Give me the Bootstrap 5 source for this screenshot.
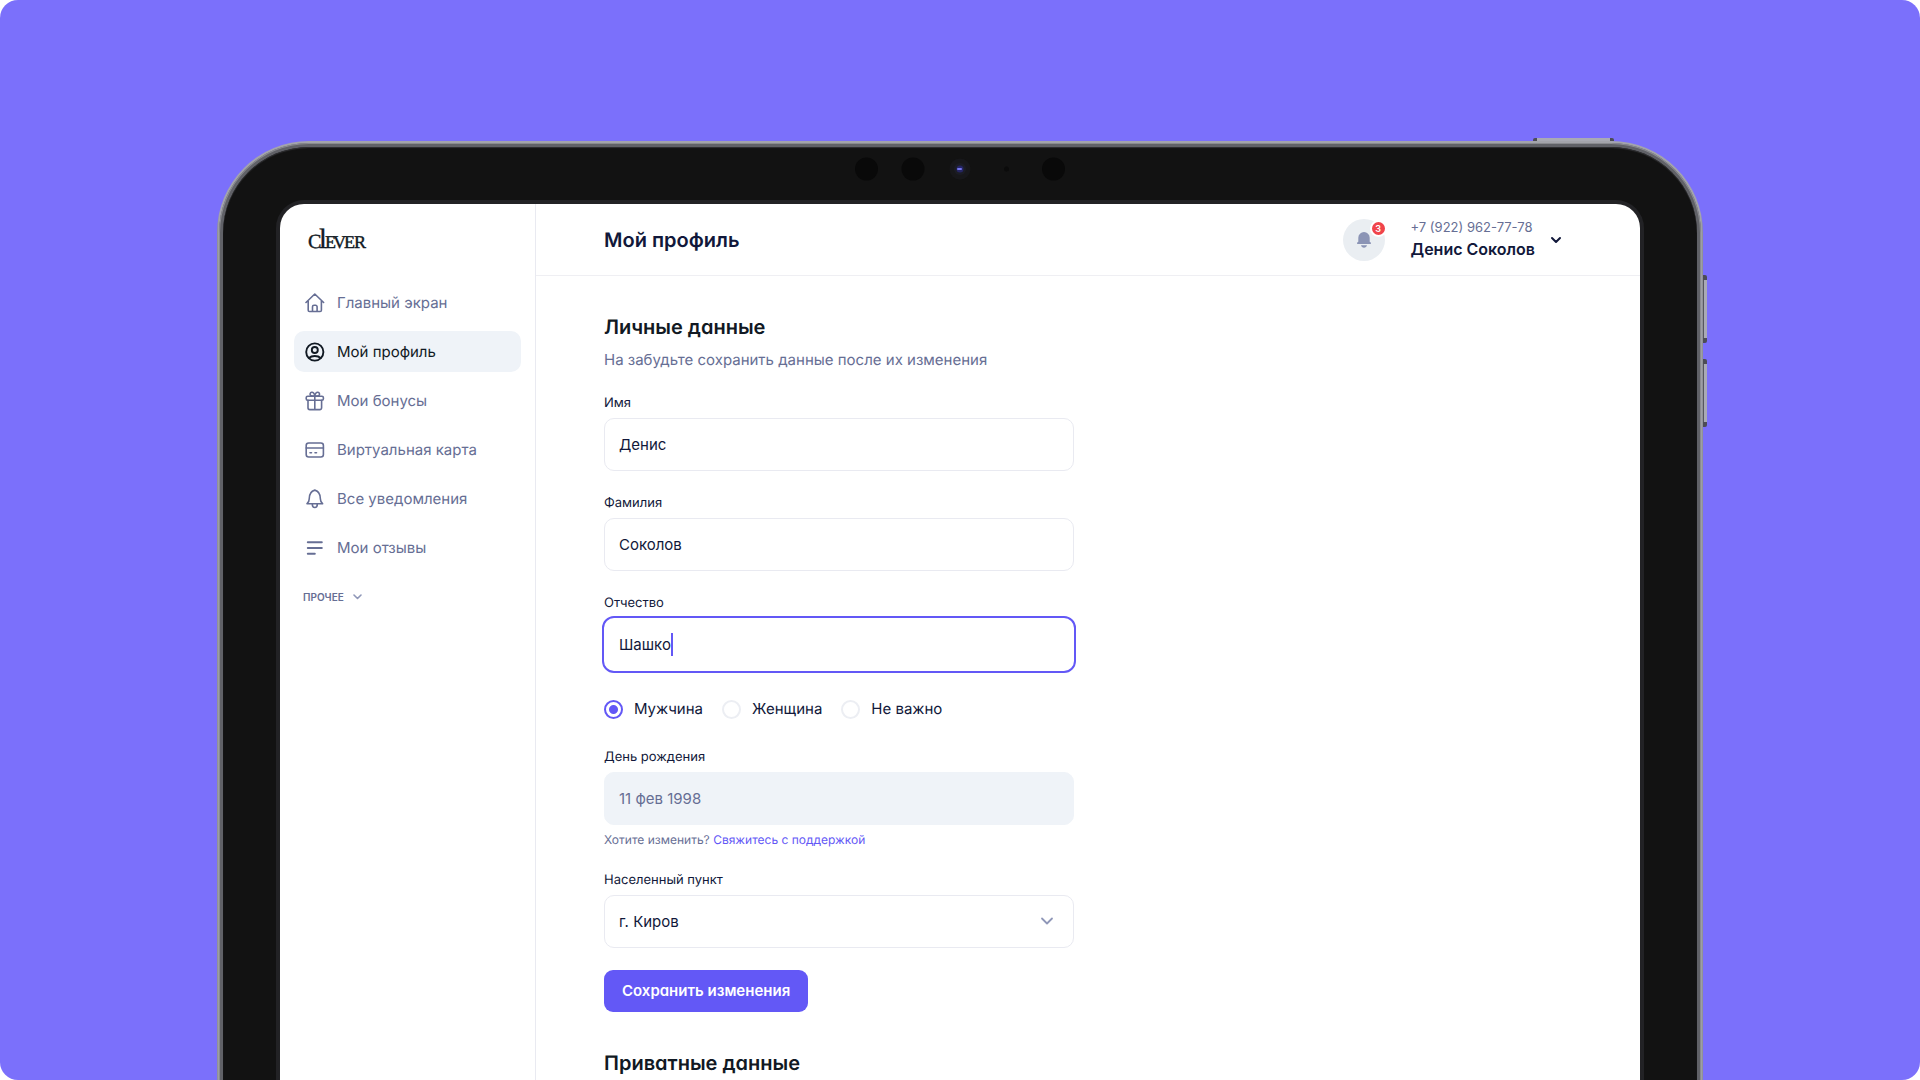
<!DOCTYPE html>
<html lang="ru">
<head>
<meta charset="utf-8">
<meta name="viewport" content="width=device-width, initial-scale=1">
<title>Clever — Мой профиль</title>
<link rel="stylesheet" href="https://cdn.jsdelivr.net/npm/bootstrap@5.3.0/dist/css/bootstrap.min.css">
<style>
:root { --accent: #6358f6; --ink: #11183a; --dark: #111923; --muted: #666e94; --line: #e9eaf1; --soft: #eff3f8; }
body { font-family: Inter, "Noto Sans", sans-serif; font-size: 15px; line-height: 20px; color: var(--ink); background: #fff; text-rendering: geometricPrecision; }
.stage { height: 100vh; background: #7b70fb; border-radius: 18px; padding: 141px 24px 0; }
.tablet { max-width: 1486px; padding: 2px 2px 0; border-radius: 92px 92px 0 0; background: linear-gradient(90deg, #8a8b92, #a3a4ab 2px, #a3a4ab calc(100% - 2px), #8a8b92); }
.tablet-rim { padding: 4px 4px 0; border-radius: 90px 90px 0 0; background: #606167; box-shadow: inset 0 0 0 1px #8a8b90; }
.bezel { padding: 53px 53px 0; border-radius: 86px 86px 0 0; background: #121212; box-shadow: inset 0 1px 1px #303033; }
.screen-edge { padding: 4px 4px 0; border-radius: 28px 28px 0 0; background: #222225; }
.screen { background: #fff; border-radius: 24px 24px 0 0; overflow: hidden; }
.hw { position: absolute; background: #a9aab4; border: 0 solid #4c4c55; }
.hw-power { top: -3px; right: 89px; width: 81px; height: 3px; border-width: 0 4px; border-radius: 2px 2px 0 0; }
.hw-up, .hw-down { right: -4px; width: 4px; height: 68px; border-width: 5px 0; border-radius: 0 2px 2px 0; box-shadow: inset 1px 0 #55555f; }
.hw-up { top: 134px; }
.hw-down { top: 218px; }
.sensors { position: absolute; top: 15px; left: 50%; transform: translateX(-50%); }
.side { width: 256px; border-right: 1px solid var(--line); padding: 16px 14px; }
.brand-mark { margin: 0 0 28px 14px; overflow: visible; }
.side .nav { gap: 8px; }
.side .nav-link { height: 41px; padding: 0 11px; gap: 12px; border-radius: 10px; color: var(--muted); }
.side .nav-link.active { background: var(--soft); color: var(--dark); }
.more-btn { margin: 21px 0 0 9px; font-size: 10px; line-height: 16px; font-weight: 600; color: var(--muted); gap: 9px; }
.topbar { height: 72px; border-bottom: 1px solid #efeff3; padding: 0 78px 0 68px; }
.title-lg { font-size: 20px; line-height: 24px; font-weight: 600; font-feature-settings: "cv11"; margin: 0; }
.title-dark { color: var(--dark); }
.bell-btn { width: 42px; height: 42px; background: #eaeef2; border-radius: 50%; margin-right: 26px; }
.bell-count { position: absolute; top: 1px; right: -2px; width: 17px; height: 17px; border: 2px solid #fff; border-radius: 50%; background: #f0444b; color: #fff; font-size: 9px; line-height: 13px; font-weight: 600; }
.user-btn { gap: 15px; color: var(--ink); }
.user-phone { font-size: 13px; color: var(--muted); }
.user-name { font-size: 16px; font-weight: 600; }
.panel { padding: 39px 68px 120px; }
.form-col { max-width: 470px; }
.sub { margin: 11px 0 25px; color: var(--muted); }
.field { margin-bottom: 24px; }
.field .form-label { display: block; font-size: 13px; line-height: 16px; margin-bottom: 7px; }
.field .form-control, .field .form-select { height: 53px; padding: 0 14px; font-size: 15px; line-height: 20px; color: var(--ink); border: 1px solid var(--line); border-radius: 10px; background-image: none; }
.field .form-control:disabled { background: var(--soft); border-color: var(--soft); color: var(--muted); }
.field .form-control.is-active { border-color: transparent; outline: 2px solid var(--accent); outline-offset: 0; caret-color: transparent; }
.caret { position: absolute; left: 67px; top: 15px; width: 2px; height: 23px; background: var(--accent); }
.select-arrow { position: absolute; right: 20px; top: 20px; pointer-events: none; }
.radios { gap: 19px; margin: 28px 0 30px; }
.radios .form-check { display: flex; align-items: center; gap: 11px; min-height: 20px; padding: 0; margin: 0; }
.radios .form-check-input { width: 19px; height: 19px; margin: 0; float: none; border: 2px solid #eceef3; background: #fff; box-shadow: none; }
.radios .form-check-input:checked { border-color: var(--accent); background: radial-gradient(circle, var(--accent) 4px, #fff 5px); }
.hint { font-size: 12px; line-height: 16px; margin-top: 7px; color: var(--muted); }
.hint a { color: var(--accent); text-decoration: none; }
.save-btn { height: 42px; padding: 0 18px; margin: -2px 0 39px; border-radius: 9px; border: 0; background: var(--accent); color: #fff; font-size: 15px; line-height: 20px; font-weight: 600; font-feature-settings: "cv11"; }
.ico { fill: none; stroke: currentColor; stroke-width: 1.6; stroke-linecap: round; stroke-linejoin: round; flex: none; }
</style>
</head>
<body>
<div class="stage overflow-hidden">
  <div class="tablet position-relative mx-auto">
    <span class="hw hw-power"></span><span class="hw hw-up"></span><span class="hw hw-down"></span>
    <div class="tablet-rim">
      <div class="bezel">
        <svg class="sensors" width="214" height="26" viewBox="0 0 214 26" aria-hidden="true">
          <circle cx="13.500" cy="13" r="11.500" fill="#090909"/><circle cx="60" cy="13" r="11.500" fill="#090909"/>
          <circle cx="107" cy="13" r="10.500" fill="#17171a"/><circle cx="107" cy="13" r="6" fill="#1b1c24"/><circle cx="107" cy="13" r="3.500" fill="#252564"/><rect x="104" y="12" width="5" height="2" rx="1" fill="#7374ed"/>
          <circle cx="153.500" cy="13" r="2.500" fill="#0b0b0b"/><circle cx="200.500" cy="13" r="11.500" fill="#090909"/>
        </svg>
        <div class="screen-edge">
          <div class="screen d-flex">
            <aside class="side flex-shrink-0">
              <svg class="brand-mark d-block" width="60" height="34" viewBox="0 0 60 34" role="img" aria-label="Clever" fill="#111923" stroke="#111923" stroke-width=".4" font-family="'Liberation Serif', serif">
                <text x="0" y="28" font-size="20">C</text><text x="11" y="28" font-size="28">l</text><text x="17 25 36 46" y="28" font-size="18">EVER</text>
              </svg>
              <nav class="nav flex-column">
                <a class="nav-link d-flex align-items-center" href="#"><svg class="ico" width="20" height="20" viewBox="0 0 20 20"><path d="M1 9.500 9.800 1l8.800 8.500M3.200 8v9.200a1.300 1.300 0 0 0 1.300 1.300h10.600a1.300 1.300 0 0 0 1.300-1.300V8M7.500 18.300v-4.500a1.500 1.500 0 0 1 1.500-1.500h1.600a1.500 1.500 0 0 1 1.500 1.500v4.500"/></svg>Главный экран</a>
                <a class="nav-link active d-flex align-items-center" href="#" aria-current="page"><svg class="ico" width="20" height="20" viewBox="0 0 20 20"><g stroke-width="1.900"><circle cx="9.800" cy="10" r="8.600"/><circle cx="9.800" cy="8" r="3"/><path d="M4 16c1.500-1.500 3.500-2 5.800-2s4.300.5 5.800 2"/></g></svg>Мой профиль</a>
                <a class="nav-link d-flex align-items-center" href="#"><svg class="ico" width="20" height="20" viewBox="0 0 20 20"><rect x="1.200" y="5.200" width="17.200" height="4" rx="1.500"/><path d="M3 9.300v7.500a1.800 1.800 0 0 0 1.800 1.800h10a1.800 1.800 0 0 0 1.800-1.800V9.300M9.800 5v13.500M9.800 5H7.500C5.300 5 4.800 3.800 5.200 2.600 5.700 1.200 7.500.8 8.600 2 9.300 2.800 9.800 4 9.800 5ZM9.800 5h2.300c2.200 0 2.700-1.200 2.300-2.400-.5-1.400-2.300-1.800-3.400-.6C10.300 2.800 9.800 4 9.800 5Z"/></svg>Мои бонусы</a>
                <a class="nav-link d-flex align-items-center" href="#"><svg class="ico" width="20" height="20" viewBox="0 0 20 20"><rect x="1.200" y="3" width="17.200" height="14" rx="2.500"/><path d="M1.200 8h17.200M5 12.800h1.500M10 12.800h1.500"/></svg>Виртуальная карта</a>
                <a class="nav-link d-flex align-items-center" href="#"><svg class="ico" width="20" height="20" viewBox="0 0 20 20"><path d="M2 14.700c1.300-1 2.200-2.500 2.200-4.700 0-4.500 2-8 5.600-8.900 3.600.9 5.600 4.400 5.600 8.900 0 2.200.9 3.700 2.200 4.700ZM7.300 15.200c0 2 1 3.300 2.500 3.300s2.500-1.300 2.500-3.300"/></svg>Все уведомления</a>
                <a class="nav-link d-flex align-items-center" href="#"><svg class="ico" width="20" height="20" viewBox="0 0 20 20"><g stroke-width="2"><path d="M2.800 4.300h14M2.800 10h14M2.800 15.700h7"/></g></svg>Мои отзывы</a>
              </nav>
              <button class="more-btn btn p-0 border-0 d-flex align-items-center" type="button">ПРОЧЕЕ<svg class="ico" width="9" height="6" viewBox="0 0 9 6"><path d="m1 1 3.500 3.500L8 1" stroke="#8f97b8"/></svg></button>
            </aside>
            <div class="flex-grow-1">
              <header class="topbar d-flex align-items-center">
                <h1 class="title-lg me-auto">Мой профиль</h1>
                <button class="bell-btn btn p-0 border-0 position-relative d-flex align-items-center justify-content-center" type="button" aria-label="Уведомления">
                  <svg width="14" height="16" viewBox="0 0 14 16" fill="#8b94b5"><path d="M7 0a5.700 5.700 0 0 0-5.700 5.700v4L.3 10.600a.8.8 0 0 0 .5 1.400h12.400a.8.8 0 0 0 .5-1.400l-1-.9v-4A5.700 5.700 0 0 0 7 0ZM4 13.200h6c-.3 1.600-1.500 2.500-3 2.500s-2.700-.9-3-2.500Z"/></svg>
                  <span class="bell-count">3</span>
                </button>
                <button class="user-btn btn p-0 border-0 d-flex align-items-center text-start" type="button">
                  <span><span class="user-phone d-block">+7 (922) 962-77-78</span><span class="user-name d-block">Денис Соколов</span></span>
                  <svg class="ico" width="12" height="8" viewBox="0 0 12 8"><path d="m2 2 4 4 4-4" stroke-width="2"/></svg>
                </button>
              </header>
              <main class="panel">
                <form class="form-col">
                  <h2 class="title-lg title-dark">Личные данные</h2>
                  <p class="sub">На забудьте сохранить данные после их изменения</p>
                  <div class="field"><label class="form-label" for="first">Имя</label><input class="form-control" id="first" type="text" value="Денис"></div>
                  <div class="field"><label class="form-label" for="last">Фамилия</label><input class="form-control" id="last" type="text" value="Соколов"></div>
                  <div class="field"><label class="form-label" for="middle">Отчество</label><div class="position-relative"><input class="form-control is-active" id="middle" type="text" value="Шашко"><span class="caret"></span></div></div>
                  <div class="radios d-flex">
                    <div class="form-check"><input class="form-check-input" type="radio" name="sex" id="sex-m" checked><label for="sex-m">Мужчина</label></div>
                    <div class="form-check"><input class="form-check-input" type="radio" name="sex" id="sex-f"><label for="sex-f">Женщина</label></div>
                    <div class="form-check"><input class="form-check-input" type="radio" name="sex" id="sex-n"><label for="sex-n">Не важно</label></div>
                  </div>
                  <div class="field"><label class="form-label" for="birth">День рождения</label><input class="form-control" id="birth" type="text" value="11 фев 1998" disabled><div class="hint">Хотите изменить? <a href="#">Свяжитесь с поддержкой</a></div></div>
                  <div class="field"><label class="form-label" for="city">Населенный пункт</label><div class="position-relative"><select class="form-select" id="city"><option>г. Киров</option></select><svg class="ico select-arrow" width="14" height="12" viewBox="0 0 14 12"><path d="m2 3.500 5 5 5-5" stroke="#8f97b8" stroke-width="1.800"/></svg></div></div>
                  <button class="save-btn btn d-block" type="submit">Сохранить изменения</button>
                </form>
                <h2 class="title-lg title-dark">Приватные данные</h2>
              </main>
            </div>
          </div>
        </div>
      </div>
    </div>
  </div>
</div>
<script src="https://cdn.jsdelivr.net/npm/bootstrap@5.3.0/dist/js/bootstrap.bundle.min.js"></script>
</body>
</html>
